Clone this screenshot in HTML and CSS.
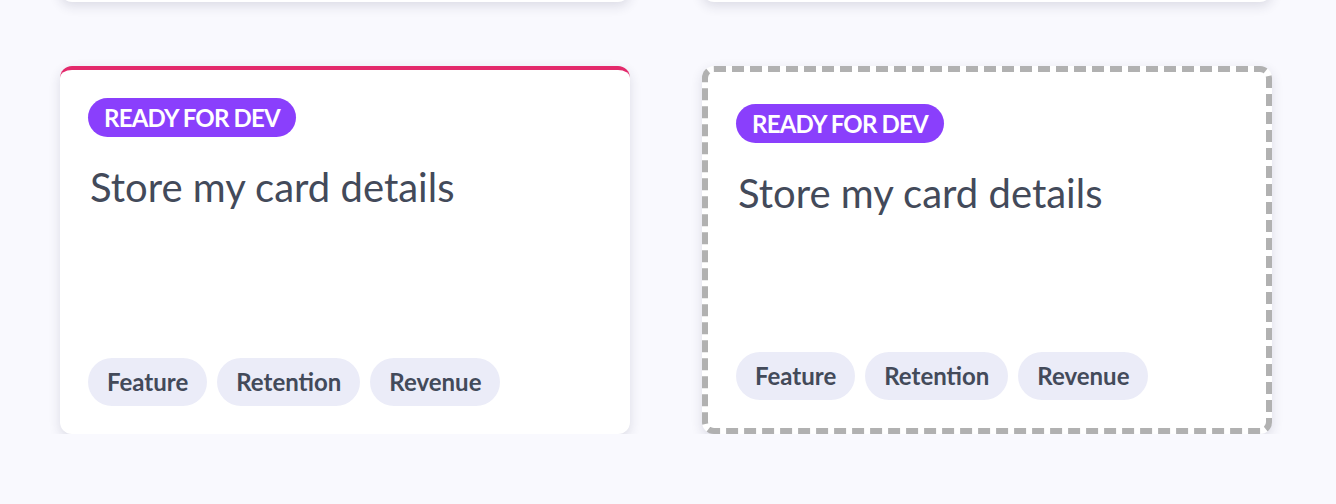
FILE: index.html
```html
<!DOCTYPE html>
<html lang="en">
<head>
<meta charset="utf-8">
<title>Board</title>
<link rel="stylesheet" href="styles.css">
</head>
<body>
<div class="board">
  <div class="card card-prev"></div>
  <div class="card card-prev"></div>
  <div class="card card-accent">
    <span class="status">READY FOR DEV</span>
    <h2 class="title">Store my card details</h2>
    <div class="tags">
      <span class="tag">Feature</span>
      <span class="tag">Retention</span>
      <span class="tag">Revenue</span>
    </div>
  </div>
  <div class="card card-placeholder">
    <span class="status">READY FOR DEV</span>
    <h2 class="title">Store my card details</h2>
    <div class="tags">
      <span class="tag">Feature</span>
      <span class="tag">Retention</span>
      <span class="tag">Revenue</span>
    </div>
  </div>
</div>
</body>
</html>
```
FILE: styles.css
```css
html, body {
  margin: 0;
  padding: 0;
  background: #f9f9fe;
  font-family: "Source Sans Pro", Lato, "Liberation Sans", sans-serif;
  overflow: hidden;
}

.board {
  display: grid;
  grid-template-columns: repeat(2, 570px);
  column-gap: 72px;
  row-gap: 64px;
  padding-left: 60px;
  margin-top: -366px;
}

.card {
  box-sizing: border-box;
  height: 368px;
  background: #ffffff;
  border-radius: 12px;
  box-shadow: 0 4px 12px rgba(40, 40, 80, 0.14);
  display: flex;
  flex-direction: column;
  align-items: flex-start;
  padding: 28px;
}

.card-accent {
  border-top: 4px solid #e3296b;
}

.card-placeholder {
  border: 6px dashed #b1b1b1;
  padding-top: 32px;
}

.status {
  display: inline-block;
  background: #8a3ffc;
  color: #ffffff;
  font-weight: 700;
  font-size: 24px;
  letter-spacing: -0.8px;
  line-height: 39px;
  height: 39px;
  padding: 0 16px;
  border-radius: 20px;
}

.title {
  margin: 26px 0 0 2px;
  font-weight: 400;
  font-size: 40px;
  line-height: 48px;
  color: #434a5a;
}

.tags {
  margin-top: auto;
  display: flex;
  gap: 10px;
}

.tag {
  display: inline-block;
  background: #ebecf8;
  color: #434a5a;
  font-weight: 700;
  font-size: 24px;
  line-height: 48px;
  height: 48px;
  padding: 0 19px;
  border-radius: 24px;
}
```
